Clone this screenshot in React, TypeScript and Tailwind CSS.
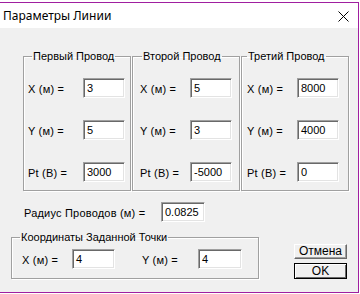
const sunken =
  "h-[20px] bg-white border border-t-[#a0a0a0] border-l-[#a0a0a0] border-b-white border-r-white shadow-[inset_1px_1px_0_#696969,inset_-1px_-1px_0_#e3e3e3] px-[3px] text-[11px] leading-[18px] text-black";

const groupBox =
  "border border-[#a0a0a0] shadow-[inset_1px_1px_0_#fff,1px_1px_0_#fff]";

const wires = [
  { title: "Первый Провод", pl: "pl-[4px]", lg: "ml-[8px]", lw: "w-[55px]", x: "3", y: "5", pt: "3000" },
  { title: "Второй Провод", pl: "pl-[7px]", lg: "ml-[9px]", lw: "w-[50px]", x: "5", y: "3", pt: "-5000" },
  { title: "Третий Провод", pl: "pl-[5px]", lg: "ml-[5px]", lw: "w-[50px]", x: "8000", y: "4000", pt: "0" },
];

const Field = ({ label, value, lw, w = "w-[42px]" }: { label: string; value: string; lw: string; w?: string }) => (
  <div className="flex items-center h-[20px]">
    <span className={`${lw} shrink-0 pt-[2px] tracking-[0.2px]`}>{label}</span>
    <div className={`${sunken} ${w}`}>{value}</div>
  </div>
);

export default function App() {
  return (
    <div className="w-[360px] h-[294px] bg-white pt-[2px] font-['Liberation_Sans',Arial,sans-serif] text-[11px] text-black">
      <div className="w-[359px] h-[291px] border-t border-r border-b border-[#a01fa0] flex flex-col">
        {/* title bar */}
        <div className="h-[25px] bg-white flex items-center justify-between pl-[3px] pr-[9px] shrink-0">
          <span className="font-['Noto_Sans',sans-serif] text-[12px]">Параметры Линии</span>
          <svg width="11" height="11" viewBox="0 0 11 11" className="mt-[1px]">
            <path d="M0.5 0.5 L10.5 10.5 M10.5 0.5 L0.5 10.5" stroke="#000" strokeWidth="1" />
          </svg>
        </div>

        {/* body */}
        <div className="flex-1 bg-[#f0f0f0] pt-[22px] pl-[11px]">
          <div className="ml-[12px] flex gap-[1px]">
            {wires.map((g) => (
              <fieldset key={g.title} className={`${groupBox} w-[108px] h-[141px]`}>
                <legend className={`${g.lg} px-[1px] leading-[13px]`}>{g.title}</legend>
                <div className={`flex flex-col gap-[22px] pt-[15px] ${g.pl}`}>
                  <Field label="X (м) =" value={g.x} lw={g.lw} />
                  <Field label="Y (м) =" value={g.y} lw={g.lw} />
                  <Field label="Pt (В) =" value={g.pt} lw={g.lw} />
                </div>
              </fieldset>
            ))}
          </div>

          <div className="ml-[13px] mt-[11px]">
            <Field label="Радиус Проводов (м) =" value="0.0825" lw="w-[137px]" w="w-[44px]" />
          </div>

          <div className="flex mt-[9px]">
            <fieldset className={`${groupBox} w-[248px] h-[48px]`}>
              <legend className="ml-[8px] px-[1px] leading-[13px]">Координаты Заданной Точки</legend>
              <div className="flex items-center pt-[5px] pl-[10px]">
                <Field label="X (м) =" value="4" lw="w-[50px]" w="w-[43px]" />
                <div className="ml-[27px]">
                  <Field label="Y (м) =" value="4" lw="w-[56px]" w="w-[44px]" />
                </div>
              </div>
            </fieldset>

            <div className="ml-[35px] mt-[13px] flex flex-col gap-[4px]">
              <button className="w-[53px] h-[15px] bg-[#f0f0f0] border border-t-white border-l-white border-b-[#696969] border-r-[#696969] shadow-[inset_-1px_-1px_0_#a0a0a0] text-[12px] leading-[13px]">
                Отмена
              </button>
              <button className="w-[53px] h-[16px] bg-[#f0f0f0] border border-black shadow-[inset_1px_1px_0_#fff,inset_-1px_-1px_0_#696969] text-[12px] leading-[13px]">
                OK
              </button>
            </div>
          </div>
        </div>
      </div>
    </div>
  );
}
